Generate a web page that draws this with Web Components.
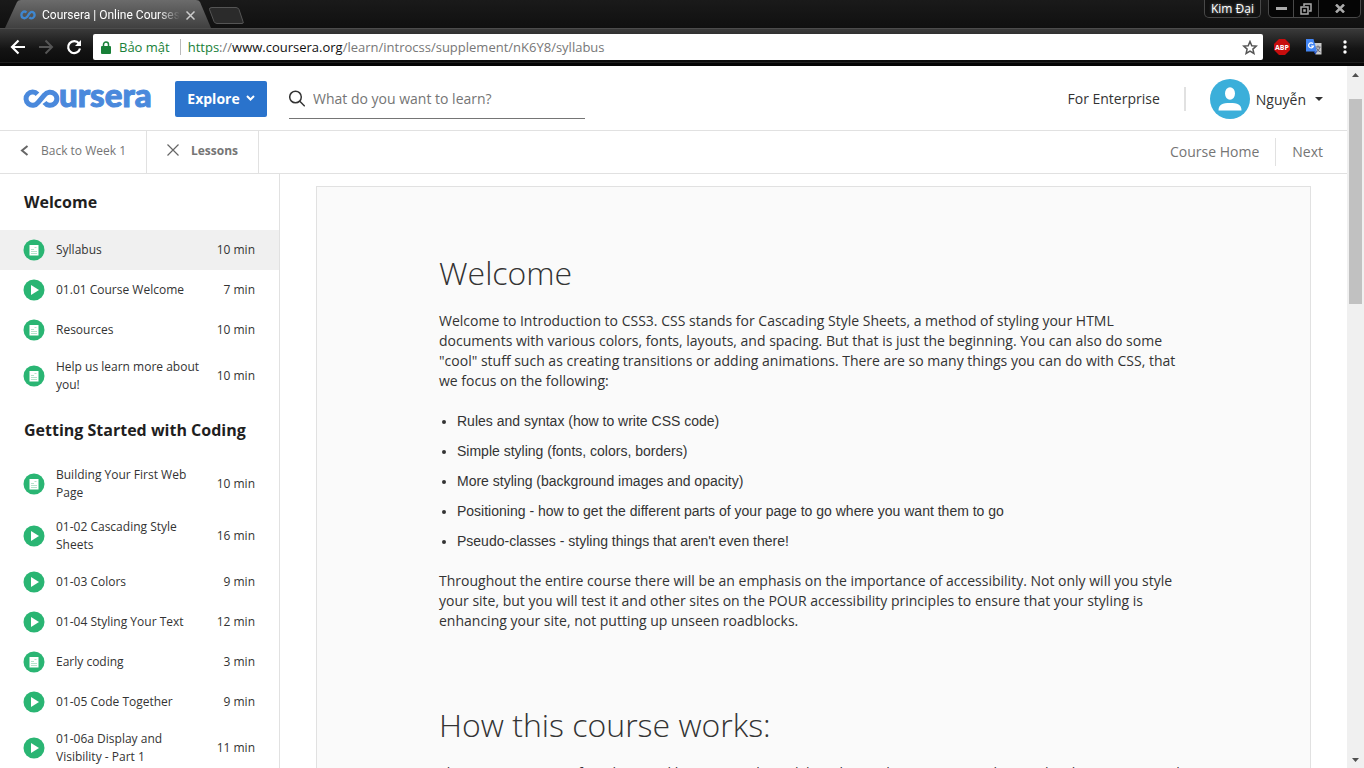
<!DOCTYPE html>
<html lang="en">
<head>
<meta charset="utf-8">
<title>Coursera | Online Courses</title>
<style>
html, body { margin: 0; height: 100%; }
body { font-family: "Open Sans", "Noto Sans", sans-serif; color: #333; background: #fff; overflow: hidden; }
</style>
</head>
<body>
<app-window>
  <browser-bar slot="bar"></browser-bar>
  <site-header slot="page"></site-header>
  <lesson-nav slot="page"></lesson-nav>
  <course-layout slot="page">
    <lesson-group slot="side" heading="Welcome">
      <lesson-item kind="doc" time="10 min" current>Syllabus</lesson-item>
      <lesson-item kind="video" time="7 min">01.01 Course Welcome</lesson-item>
      <lesson-item kind="doc" time="10 min">Resources</lesson-item>
      <lesson-item kind="doc" time="10 min">Help us learn more about you!</lesson-item>
    </lesson-group>
    <lesson-group slot="side" heading="Getting Started with Coding">
      <lesson-item kind="doc" time="10 min">Building Your First Web Page</lesson-item>
      <lesson-item kind="video" time="16 min">01-02 Cascading Style Sheets</lesson-item>
      <lesson-item kind="video" time="9 min">01-03 Colors</lesson-item>
      <lesson-item kind="video" time="12 min">01-04 Styling Your Text</lesson-item>
      <lesson-item kind="doc" time="3 min">Early coding</lesson-item>
      <lesson-item kind="video" time="9 min">01-05 Code Together</lesson-item>
      <lesson-item kind="video" time="11 min">01-06a Display and Visibility - Part 1</lesson-item>
    </lesson-group>
    <reading-card></reading-card>
  </course-layout>
  <scroll-rail slot="rail"></scroll-rail>
</app-window>

<script>
function define(name, html, setup) {
  const template = document.createElement('template');
  template.innerHTML = html;
  customElements.define(name, class extends HTMLElement {
    connectedCallback() {
      if (this.shadowRoot) return;
      const root = this.attachShadow({ mode: 'open' });
      root.append(template.content.cloneNode(true));
      if (setup) setup(this, root);
    }
  });
}

const base = `
  :host, *, *::before, *::after { box-sizing: border-box; }
  button { font: inherit; color: inherit; background: none; border: 0; padding: 0; margin: 0; display: flex; align-items: center; justify-content: center; }
  a { color: inherit; text-decoration: none; }
  svg { display: block; flex: none; }
`;

define('app-window', `
<style>${base}
  :host { display: flex; flex-direction: column; height: 100vh; }
  .view { flex: 1; min-height: 0; display: flex; }
  .page { flex: 1; min-width: 0; display: flex; flex-direction: column; overflow: hidden; }
</style>
<slot name="bar"></slot>
<div class="view">
  <div class="page"><slot name="page"></slot></div>
  <slot name="rail"></slot>
</div>`);

define('browser-bar', `
<style>${base}
  :host { display: block; background: #060606; color: #fff; font-size: 12px; }
  .tabs { display: flex; height: 28px; background: linear-gradient(#1a1a1a, #101010); }
  .tab { position: relative; z-index: 0; display: flex; align-items: center; width: 208px; padding: 2px 14px 0 20px; gap: 6px; }
  .tab > svg.shape { position: absolute; inset: 0; z-index: -1; }
  .title { flex: 1; font-family: Roboto, sans-serif; white-space: nowrap; -webkit-mask-image: linear-gradient(90deg, #000 84%, transparent); mask-image: linear-gradient(90deg, #000 84%, transparent); }
  .tab button { width: 10px; }
  .new { align-self: flex-start; margin-top: 7px; }
  .window { margin-left: auto; display: flex; align-items: flex-start; gap: 7px; padding-right: 3px; }
  .user { height: 18px; width: 57px; border: 1px solid #484848; border-top: 0; border-radius: 0 0 5px 5px; font-size: 12px; background: #111; text-shadow: 0 0 3px #999; }
  .controls { display: flex; border: 1px solid #484848; border-top: 0; border-radius: 0 0 5px 5px; height: 18px; background: #050505; }
  .controls button { width: 25px; border-right: 1px solid #484848; }
  .controls button:last-child { width: 41px; border: 0; }
  .bar { display: flex; align-items: center; height: 34px; border-top: 1px solid #4c4c4c; background: linear-gradient(#3a3a3a, #141414 60%, #0c0c0c); padding-right: 12px; padding-left: 10px; }
  .nav { display: flex; gap: 12px; width: 83px; margin-top: 3px; }
  .omni { flex: 1; display: flex; align-items: center; height: 26px; margin-top: 3px; background: #fff; border-radius: 2px; padding: 0 5px 0 8px; font-size: 13px; color: #777; }
  .secure { color: #188038; margin-left: 8px; padding-right: 10px; border-right: 1px solid #bbb; line-height: 16px; }
  .url { flex: 1; margin-left: 7px; }
  .url i { font-style: normal; color: #188038; }
  .url b { font-weight: 400; color: #111; }
  .ext { display: flex; align-items: center; margin-left: 11px; margin-top: 3px; gap: 16px; }
  .base { height: 4px; background: #050505; border-top: 1px solid #1f1f1f; }
</style>
<div class="tabs">
  <div class="tab">
    <svg class="shape" width="212" height="28" viewBox="0 0 212 28"><defs><linearGradient id="g" x2="0" y2="1"><stop stop-color="#6b6b6b"/><stop offset="1" stop-color="#404040"/></linearGradient></defs><path d="M5 28 L17 2 Q18 0 21 0 L196 0 Q199 0 200 2 L211 28Z" fill="url(#g)"/></svg>
    <svg width="16" height="10" viewBox="0 0 16 10" fill="none" stroke="#3f87d0" stroke-width="2.4"><path d="M6.5 2.4C3.8.3 1.4 2.3 1.4 5s3.2 4.6 5.8 1.8L9.4 3.4C11.8.4 14.6 2.3 14.6 5s-3 4.6-5.3 2.3"/></svg>
    <span class="title">Coursera | Online Courses</span>
    <button aria-label="Close tab"><svg width="9" height="9" viewBox="0 0 9 9" stroke="#ccc" stroke-width="1.5"><path d="M.5.5l8 8M8.500 .5l-8 8"/></svg></button>
  </div>
  <button class="new" aria-label="New tab"><svg width="36" height="18" viewBox="0 0 36 18"><path d="M4 .5h24q2 0 3 2l4 12q1 2-1 2H9q-2 0-3-2L1.500 2.500Q1 .5 4 .5Z" fill="#2b2b2b" stroke="#555"/></svg></button>
  <div class="window">
    <button class="user">Kim Đại</button>
    <div class="controls">
      <button aria-label="Minimize"><svg width="11" height="4"><rect width="11" height="3" fill="#aaa"/></svg></button>
      <button aria-label="Restore"><svg width="12" height="12" fill="none" stroke="#aaa" stroke-width="1.500"><path d="M4 3V1h7v7H9M1 4h7v7H1zM4 7h1v1H4z"/></svg></button>
      <button aria-label="Close"><svg width="10" height="9" stroke="#aaa" stroke-width="2.500"><path d="M1 .5l8 8M9 .5l-8 8"/></svg></button>
    </div>
  </div>
</div>
<div class="bar">
  <div class="nav">
    <button aria-label="Back"><svg width="16" height="16" fill="none" stroke="#fff" stroke-width="2.200"><path d="M15 8H2M8.500 1.500L2 8l6.500 6.500"/></svg></button>
    <button aria-label="Forward"><svg width="16" height="16" fill="none" stroke="#555" stroke-width="2"><path d="M1 8h13M7.500 1.500L14 8l-6.500 6.500"/></svg></button>
    <button aria-label="Reload"><svg width="16" height="16" fill="none" stroke="#fff" stroke-width="2.200"><path d="M13 4.500A6 6 0 1 0 14 9.500"/><path d="M15 1v6H9z" fill="#fff" stroke="none"/></svg></button>
  </div>
  <div class="omni">
    <svg width="10" height="13" viewBox="0 0 10 13"><path d="M2.500 5V3.500a2.500 2.500 0 0 1 5 0V5" fill="none" stroke="#188038" stroke-width="1.500"/><rect x="0" y="5" width="10" height="8" rx="1" fill="#188038"/></svg>
    <span class="secure">Bảo mật</span>
    <span class="url" role="textbox" aria-label="Address"><i>https</i>://<b>www.coursera.org</b>/learn/introcss/supplement/nK6Y8/syllabus</span>
    <button aria-label="Bookmark"><svg width="16" height="15" viewBox="0 0 16 15" fill="none" stroke="#555" stroke-width="1.500"><path d="M8 1.500l1.800 4.200 4.500.4-3.400 3 1 4.400L8 11.200l-3.900 2.300 1-4.400-3.400-3 4.500-.4z"/></svg></button>
  </div>
  <div class="ext">
    <button aria-label="Ad blocker"><svg width="16" height="16" viewBox="0 0 16 16"><path d="M5 0h6l5 5v6l-5 5H5l-5-5V5z" fill="#c70d0d"/><text x="8" y="11" text-anchor="middle" font-family="Open Sans" font-weight="700" font-size="7" fill="#fff">ABP</text></svg></button>
    <button aria-label="Translate"><svg width="16" height="16" viewBox="0 0 16 16"><path d="M7 4h8.500v11.500H9.500z" fill="#ccc"/><path d="M9.500 8h5M12 6.500V8M14 8q-1 4-4 5M10.500 9q1 3 4 4" fill="none" stroke="#667" /><path d="M0 0h7.500l3.500 12.500H0z" fill="#4285f4"/><path d="M7.500 12.500H11l-1.500 3z" fill="#2a56c6"/><path d="M7 4.700A2.500 2.500 0 1 0 7.500 7H5" fill="none" stroke="#fff" stroke-width="1.200"/></svg></button>
    <button aria-label="Menu"><svg width="14" height="14" fill="#fff"><circle cx="7" cy="2" r="1.700"/><circle cx="7" cy="7" r="1.700"/><circle cx="7" cy="12" r="1.700"/></svg></button>
  </div>
</div>
<div class="base"></div>`);

define('site-header', `
<style>${base}
  :host { display: flex; align-items: center; flex: none; height: 65px; padding: 2px 24px 0; border-bottom: 1px solid #e1e1e1; font-size: 14px; }
  .logo { width: 151px; flex: none; display: flex; }
  .logo svg { overflow: visible; }
  .explore { width: 92px; height: 36px; background: #2a73cc; color: #fff; font-weight: 700; border-radius: 2px; gap: 6px; padding-bottom: 2px; }
  .search { display: flex; align-items: center; gap: 8px; width: 296px; height: 40px; margin-left: 22px; border-bottom: 1px solid #757575; }
  input { flex: 1; min-width: 0; border: 0; outline: 0; padding: 0; font: inherit; color: #333; background: none; }
  input::placeholder { color: #757575; opacity: 1; }
  nav { display: flex; align-items: center; margin-left: auto; }
  .ent { padding-right: 24px; border-right: 2px solid #e1e1e1; line-height: 24px; }
  .me { margin-left: 24px; gap: 6px; }
  .me svg:last-child { margin-left: 3px; }
</style>
<a class="logo" href="#" aria-label="Coursera">
  <svg width="128" height="24" viewBox="0 0 128 24"><path d="M13.500 7.200A6.600 6.600 0 1 0 14 15.500L20.500 8A6.800 6.500 0 1 1 20.500 15.500" fill="none" stroke="#4a89dc" stroke-width="5"/><text x="35" y="20" font-family="Lato" font-weight="900" font-size="33" fill="#4a89dc" stroke="#4a89dc" stroke-width="1">ursera</text></svg>
</a>
<button class="explore">Explore <svg width="9" height="7" fill="none" stroke="#fff" stroke-width="2"><path d="M1 1l3.500 3.500L8 1"/></svg></button>
<label class="search">
  <svg width="16" height="17" fill="none" stroke="#333" stroke-width="1.500"><circle cx="6.500" cy="7" r="5.800"/><path d="M10.800 11.300l5 5"/></svg>
  <input type="search" aria-label="Search" placeholder="What do you want to learn?">
</label>
<nav>
  <a class="ent" href="#">For Enterprise</a>
  <button class="me">
    <svg width="40" height="40" viewBox="0 0 40 40"><circle cx="20" cy="20" r="20" fill="#3bafda"/><ellipse cx="20" cy="14.500" rx="5" ry="6.200" fill="#fff"/><path d="M8.500 31.500c0-6 4-7.500 11.500-7.500s11.500 1.500 11.500 7.500z" fill="#fff"/></svg>
    Nguyễn
    <svg width="8" height="4"><path d="M0 0h8L4 4z" fill="#333"/></svg>
  </button>
</nav>`);

define('lesson-nav', `
<style>${base}
  :host { display: flex; flex: none; height: 43px; border-bottom: 1px solid #e1e1e1; font-size: 12px; color: #757575; }
  .cell { display: flex; align-items: center; padding-left: 20px; height: 42px; padding-bottom: 4px; border-right: 1px solid #e1e1e1; }
  .back { width: 147px; gap: 12px; }
  .lessons { width: 112px; font-weight: 700; gap: 12px; justify-content: flex-start; }
  .right { margin-left: auto; display: flex; align-items: center; font-size: 14px; padding-right: 24px; }
  .right a { line-height: 28px; }
  .right a:first-child { padding-right: 16px; margin-right: 16px; border-right: 1px solid #e1e1e1; }
</style>
<a class="cell back" href="#"><svg width="9" height="11" fill="none" stroke="#666" stroke-width="2"><path d="M7.500 1L2 5.500 7.500 10"/></svg>Back to Week 1</a>
<button class="cell lessons"><svg width="12" height="12" stroke="#666" stroke-width="1.200"><path d="M.5.5l11 11M11.500 .5l-11 11"/></svg>Lessons</button>
<nav class="right"><a href="#">Course Home</a><a href="#">Next</a></nav>`);

define('course-layout', `
<style>${base}
  :host { display: flex; flex: 1; min-height: 0; }
  aside { width: 280px; flex: none; border-right: 1px solid #e1e1e1; overflow: hidden; }
  main { flex: 1; min-width: 0; overflow: hidden; padding: 12px 36px; }
</style>
<aside><slot name="side"></slot></aside>
<main><slot></slot></main>`);

define('lesson-group', `
<style>${base}
  :host { display: block; }
  h2 { margin: 0; padding: 16px 24px; font-size: 16px; line-height: 24px; font-weight: 700; color: #1f1f1f; white-space: nowrap; }
</style>
<h2></h2><slot></slot>`, (el, root) => {
  root.querySelector('h2').textContent = el.getAttribute('heading');
});

const glyphs = {
  doc: '<rect x="6.500" y="6" width="9" height="10.500" fill="#fff"/><path d="M8 10.500h3M8 12.500h6M8 14.500h6M11.500 8.500h2" stroke="#b4e3cb" fill="none"/>',
  video: '<path d="M8 6v10l8-5z" fill="#fff"/>'
};
define('lesson-item', `
<style>${base}
  :host { display: block; }
  :host([current]) { background: #f0f0f0; }
  a { display: flex; align-items: center; min-height: 40px; padding: 8px 24px; font-size: 12px; line-height: 18px; }
  svg { margin-right: 11px; margin-left: -1px; }
  .name { width: 148px; }
  .time { margin-left: auto; }
</style>
<a href="#"><svg width="22" height="22" viewBox="0 0 22 22"></svg><span class="name"><slot></slot></span><span class="time"></span></a>`, (el, root) => {
  root.querySelector('svg').innerHTML = '<circle cx="11" cy="11" r="10.500" fill="#2ab573"/>' + glyphs[el.getAttribute('kind')];
  root.querySelector('.time').textContent = el.getAttribute('time');
});

define('reading-card', `
<style>${base}
  :host { display: block; background: #fafafa; border: 1px solid #e1e1e1; padding: 62px 122px; font-size: 14px; line-height: 20px; }
  h1 { margin: 0 0 14px; font-size: 32px; line-height: 48px; font-weight: 300; }
  p { margin: 0 0 20px; }
  ul { margin: 0 0 20px; padding-left: 18px; font-family: "Liberation Sans", Arial, sans-serif; }
  li + li { margin-top: 10px; }
  section + section { margin-top: 70px; }
</style>
<section>
  <h1>Welcome</h1>
  <p>Welcome to Introduction to CSS3. CSS stands for Cascading Style Sheets, a method of styling your HTML documents with various colors, fonts, layouts, and spacing. But that is just the beginning. You can also do some "cool" stuff such as creating transitions or adding animations. There are so many things you can do with CSS, that we focus on the following:</p>
  <ul>
    <li>Rules and syntax (how to write CSS code)</li>
    <li>Simple styling (fonts, colors, borders)</li>
    <li>More styling (background images and opacity)</li>
    <li>Positioning - how to get the different parts of your page to go where you want them to go</li>
    <li>Pseudo-classes - styling things that aren't even there!</li>
  </ul>
  <p>Throughout the entire course there will be an emphasis on the importance of accessibility. Not only will you style your site, but you will test it and other sites on the POUR accessibility principles to ensure that your styling is enhancing your site, not putting up unseen roadblocks.</p>
</section>
<section>
  <h1>How this course works:</h1>
  <p>This course is a mix of readings and lectures. Each week has short videos, quizzes and examples that you can work through at your own pace.</p>
</section>`);

define('scroll-rail', `
<style>${base}
  :host { display: flex; flex-direction: column; align-items: center; flex: none; width: 17px; background: #f0f0f0; }
  button { width: 17px; height: 17px; flex: none; }
  .track { flex: 1; width: 13px; padding-top: 16px; }
  .thumb { height: 205px; background: #c1c1c1; }
</style>
<button aria-label="Scroll up"><svg width="7" height="4"><path d="M0 4h7L3.500 0z" fill="#505050"/></svg></button>
<div class="track"><div class="thumb"></div></div>
<button aria-label="Scroll down"><svg width="7" height="4"><path d="M0 0h7L3.500 4z" fill="#505050"/></svg></button>`);
</script>
</body>
</html>
